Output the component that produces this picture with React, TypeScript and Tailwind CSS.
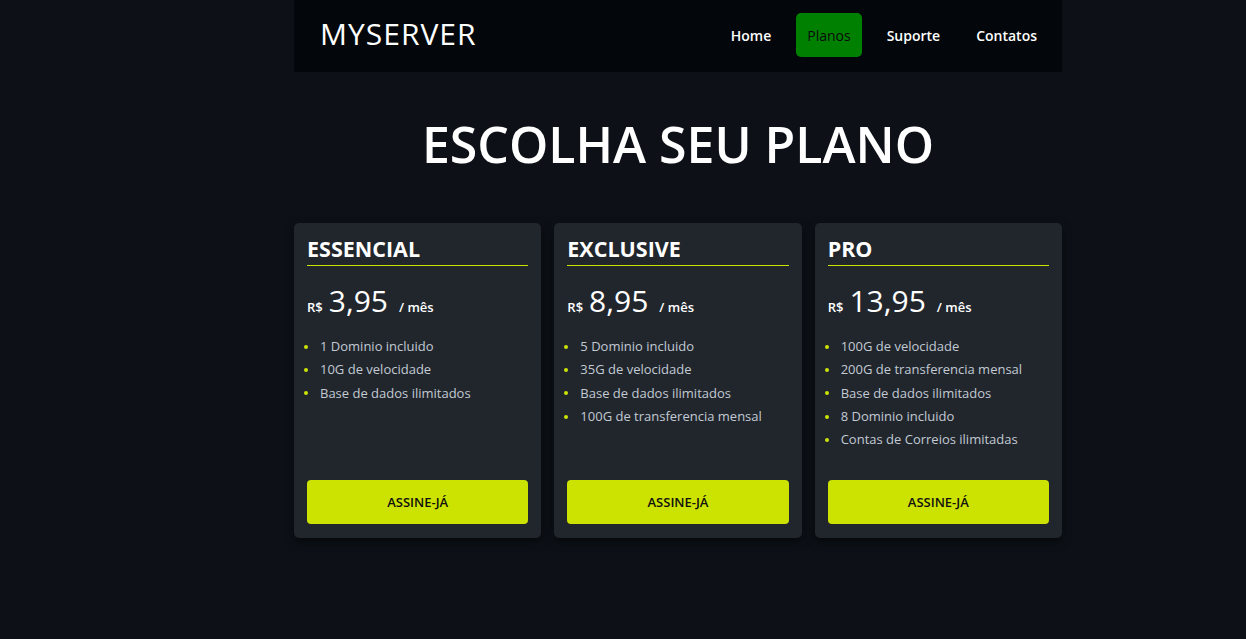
const plans = [
  {
    name: 'ESSENCIAL',
    price: '3,95',
    items: ['1 Dominio incluido', '10G de velocidade', 'Base de dados ilimitados'],
  },
  {
    name: 'EXCLUSIVE',
    price: '8,95',
    items: ['5 Dominio incluido', '35G de velocidade', 'Base de dados ilimitados', '100G de transferencia mensal'],
  },
  {
    name: 'PRO',
    price: '13,95',
    items: [
      '100G de velocidade',
      '200G de transferencia mensal',
      'Base de dados ilimitados',
      '8 Dominio incluido',
      'Contas de Correios ilimitadas',
    ],
  },
];

function PlanCard({ plan }: { plan: (typeof plans)[number] }) {
  return (
    <div className="flex flex-col rounded-[5px] bg-[#21262d] px-[13px] pt-[13px] pb-[14px] shadow-[0_4px_10px_rgba(0,0,0,0.6)]">
      <h3 className="border-b border-[#cce200] pb-[3px] text-[21.5px] leading-[26px] font-bold text-white">
        {plan.name}
      </h3>
      <div className="mt-[17px] flex items-baseline text-white">
        <span className="text-[13px] font-semibold">R$</span>
        <span className="ml-[6px] text-[30px] leading-[36px]">{plan.price}</span>
        <span className="ml-[11px] text-[13px] font-semibold">/ mês</span>
      </div>
      <ul className="mt-[16px] mb-[29px] -ml-[3px] flex flex-col">
        {plan.items.map((item) => (
          <li key={item} className="flex items-center text-[13px] leading-[23.3px] text-[#c2cad3]">
            <span className="mr-[12px] h-[4px] w-[4px] rounded-full bg-[#cce200]" />
            {item}
          </li>
        ))}
      </ul>
      <button className="mt-auto h-[44px] rounded-[4px] bg-[#cce200] text-[13px] font-semibold text-[#111]">
        ASSINE-JÁ
      </button>
    </div>
  );
}

export default function App() {
  return (
    <div className="min-h-screen bg-[#0d1117]" style={{ fontFamily: '"Open Sans", sans-serif' }}>
      <div className="ml-[294px] w-[768px]">
        <nav className="flex h-[72px] items-center justify-between bg-[#03070b] pb-[2px] pl-[26px] pr-[14px]">
          <span className="mb-[4px] text-[30px] tracking-[1px] text-white">MYSERVER</span>
          <div className="flex items-center gap-[14px] text-[14px] font-semibold">
            <a className="px-[11px] text-white">Home</a>
            <a className="flex h-[44px] items-center rounded-[5px] bg-[#008000] px-[11px] font-normal text-[#0b0b0b]">
              Planos
            </a>
            <a className="px-[11px] text-white">Suporte</a>
            <a className="px-[11px] text-white">Contatos</a>
          </div>
        </nav>
        <h1 className="mt-[32px] text-center text-[50px] leading-[80px] font-semibold text-white">
          ESCOLHA SEU PLANO
        </h1>
        <div className="mt-[39px] grid grid-cols-3 gap-[13px]">
          {plans.map((plan) => (
            <PlanCard key={plan.name} plan={plan} />
          ))}
        </div>
      </div>
    </div>
  );
}
